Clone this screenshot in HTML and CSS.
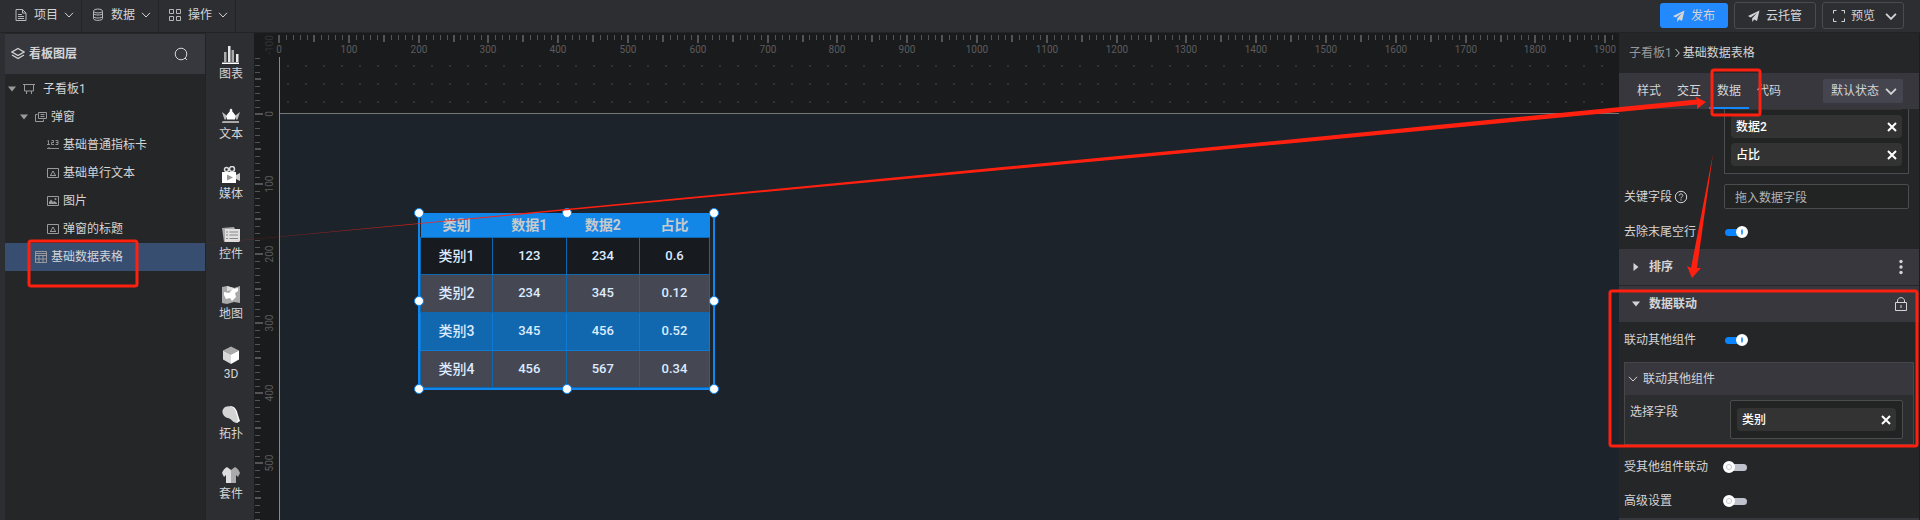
FILE: index.html
```html
<!DOCTYPE html>
<html lang="zh-CN">
<head>
  <meta charset="UTF-8" />
  <meta name="viewport" content="width=device-width, initial-scale=1.0"/>
  <title>看板编辑器</title>
  <link rel="stylesheet" href="styles.css">
</head>
<body>

<!-- shared icons -->
<svg class="defs" aria-hidden="true">
  <symbol id="i-down" viewBox="0 0 10 6"><path d="M1 .8 5 5 9 .8" fill="none" stroke="currentColor"/></symbol>
  <symbol id="i-down-bold" viewBox="0 0 10 6"><path d="M.8 .8 5 5 9.200 .8" fill="none" stroke="currentColor" stroke-width="1.600"/></symbol>
  <symbol id="i-caret" viewBox="0 0 8 6"><path d="M0 .5h8L4 5.500z" fill="currentColor"/></symbol>
  <symbol id="i-plane" viewBox="0 0 12 12"><path d="M11.500.5 0 6l2.700 1.500L9 3 4.200 8.200V12l2-2.500L9 11z" fill="currentColor"/></symbol>
  <symbol id="i-x" viewBox="0 0 10 10"><path d="M1 1l8 8M9 1 1 9" stroke="currentColor" stroke-width="2"/></symbol>
  <symbol id="i-text" viewBox="0 0 12 12"><path d="M.5 1.500h11v9H.5zM3.500 8.500 6 4l2.500 4.500zM3 8.500h6" fill="none" stroke="currentColor"/></symbol>
</svg>

<div class="app">
  <header class="topbar">
    <nav class="menu">
      <button class="menu-item"><svg width="12" height="14" viewBox="0 0 12 14"><path d="M1 1.500h6.500L11 5v7.500H1zM7.500 1.500V5H11M3 6.500h4M3 8.500h6M3 10.500h6" fill="none" stroke="currentColor"/></svg>项目<svg class="chev"><use href="#i-down"/></svg></button>
      <button class="menu-item"><svg width="12" height="14" viewBox="0 0 12 14"><path d="M1.500 3.500v7c0 2.500 9 2.500 9 0v-7M1.500 5.500c0 2 9 2 9 0M1.500 8.500c0 2 9 2 9 0" fill="none" stroke="currentColor"/><ellipse cx="6" cy="3" rx="4.500" ry="2" fill="none" stroke="currentColor"/></svg>数据<svg class="chev"><use href="#i-down"/></svg></button>
      <button class="menu-item"><svg width="12" height="14" viewBox="0 0 12 14"><path d="M.5 1.500h4v4h-4zM7.500 1.500h4v4h-4zM.5 8.500h4v4h-4zM7.500 8.500h4v4h-4z" fill="none" stroke="currentColor"/></svg>操作<svg class="chev"><use href="#i-down"/></svg></button>
    </nav>
    <div class="actions">
      <button class="btn btn-primary"><svg width="12" height="12"><use href="#i-plane"/></svg>发布</button>
      <button class="btn btn-wide"><svg width="12" height="12"><use href="#i-plane"/></svg>云托管</button>
      <button class="btn btn-wide btn-menu"><svg width="12" height="12" viewBox="0 0 12 12"><path d="M.5 3.500v-3h3M8.500.5h3v3M11.500 8.500v3h-3M3.500 11.500h-3v-3" fill="none" stroke="currentColor"/></svg>预览<svg class="chev-lg"><use href="#i-down-bold"/></svg></button>
    </div>
  </header>

  <main class="workspace">
    <aside class="layers">
      <div class="layers-head">
        <svg width="14" height="14" viewBox="0 0 14 14"><path d="M7 1.500 13 5 7 8.500 1 5zM1 8l6 3.500L13 8" fill="none" stroke="currentColor" stroke-width="1.300"/></svg>
        <h2>看板图层</h2>
        <button class="icon-btn" aria-label="搜索"><svg width="14" height="14" viewBox="0 0 14 14"><circle cx="7" cy="7" r="5.800" fill="none" stroke="currentColor"/><path d="M11 11l2 2" stroke="currentColor"/></svg></button>
      </div>
      <ul class="tree">
        <li class="node lv0"><svg class="caret"><use href="#i-caret"/></svg><svg class="ico" viewBox="0 0 12 12"><path d="M0 1.500h12M1.500 1.500v6.500h9V1.500M3.500 8v3M8.500 8v3" fill="none" stroke="currentColor"/></svg>子看板1</li>
        <li class="node lv1"><svg class="caret"><use href="#i-caret"/></svg><svg class="ico" viewBox="0 0 12 12"><path d="M3.500 1.500h8v6h-8zM2.500 3.500h-2v7h8v-2M5.500 3.500h4M5.500 5.500h4" fill="none" stroke="currentColor"/></svg>弹窗</li>
        <li class="node lv2"><svg class="ico" viewBox="0 0 12 12"><path d="M.5 2l1-.5v4M0 5.500h3M4.500 1.500h2v2h-2v2h2.500M8.500 1.500h2.500v4H8.500M9 3.500h2M0 9.500h12M2 8v1.500" fill="none" stroke="currentColor" stroke-width=".9"/></svg>基础普通指标卡</li>
        <li class="node lv2"><svg class="ico"><use href="#i-text"/></svg>基础单行文本</li>
        <li class="node lv2"><svg class="ico" viewBox="0 0 12 12"><path d="M.5 1.500h11v9H.5z" fill="none" stroke="currentColor"/><path d="M2 9V7l2-2.500L6 7l1.500-1L10 8v1z" fill="currentColor"/><circle cx="8.500" cy="4" r="1" fill="currentColor"/></svg>图片</li>
        <li class="node lv2"><svg class="ico"><use href="#i-text"/></svg>弹窗的标题</li>
        <li class="node lv1 leaf selected"><svg class="ico" viewBox="0 0 12 12"><path d="M.5 .5h11v11H.5zM.5 4.500h11M.5 8h11M4 4.500v7M8 4.500v7M.5 2.500h11" fill="none" stroke="currentColor"/></svg>基础数据表格</li>
      </ul>
    </aside>

    <nav class="tools">
      <button class="tool"><svg viewBox="0 0 18 18"><path d="M1 16.500h16V18H0v-1.500z" fill="#fff"/><path d="M2 6h2.500v10H2zM9.500 4H12v12H9.500z" fill="#aaa"/><path d="M6 0h2.500v16H6zM14 8h2.500v8H14z" fill="#e8e8e8"/></svg>图表</button>
      <button class="tool"><svg viewBox="0 0 18 18"><path d="M0 6l4 3v4.500H2.500zM18 6l-4 3v4.500h1.500z" fill="#bbb"/><path d="M9 2.500l1.500 1.500-.5 1 4 5-1 3.500H5L4 10l4-5-.5-1z" fill="#fff"/><path d="M1 15h16v2H0v-1z" fill="#aaa"/></svg>文本</button>
      <button class="tool"><svg viewBox="0 0 18 18"><circle cx="4.500" cy="3.500" r="2" fill="none" stroke="#ddd" stroke-width="1.500"/><circle cx="10" cy="3" r="2.500" fill="none" stroke="#ddd" stroke-width="1.500"/><path d="M0 6h14v11H0z" fill="#fff"/><path d="M14 9l4-2v8l-4-2z" fill="#ccc"/><path d="M5 8.500l6 3-6 3z" fill="#999"/></svg>媒体</button>
      <button class="tool"><svg viewBox="0 0 18 18"><path d="M0 2l12-1 1 2v12L2 16z" fill="#aaa"/><path d="M3 3h15v12l-1 1H3z" fill="#e0e0e0"/><path d="M4 6h2M7.500 6H16M4 9h2M7.500 9H16M4 12.500h2M7.500 12.500H16" stroke="#888"/></svg>控件</button>
      <button class="tool"><svg viewBox="0 0 18 18"><path d="M0 1l5-1 7 2 6-2v17l-6-1-7 2-5-1z" fill="#aaa"/><path d="M5 0l7 2v2L5 5z" fill="#ddd"/><path d="M2 6l5 1 4-4 5-1v3l-3 2 1 4-4 4-2-3-4 1-2-4z" fill="#fff"/></svg>地图</button>
      <button class="tool"><svg viewBox="0 0 18 18"><path d="M9 .5 17 4.500 9 8.500 1 4.500z" fill="#aaa"/><path d="M1 4.500l8 4V18l-8-4.500z" fill="#d8d8d8"/><path d="M17 4.500l-8 4V18l8-4.500z" fill="#fff"/></svg>3D</button>
      <button class="tool"><svg viewBox="0 0 18 18"><path d="M8 0c5 0 7 4 8 9l2 6-3 2z" fill="#fff"/><path d="M3 1c6-2 10 1 11 6l2 6-1 4c-4 0-5-4-9-5C1 11-2 5 3 1z" fill="#d4d4d4"/></svg>拓扑</button>
      <button class="tool"><svg viewBox="0 0 18 18"><path d="M5 1l4 3v13H4v-8L2 11 0 7c1-3 3-5 5-6z" fill="#ddd"/><path d="M13 1 9 4v13h5v-8l2 2 2-4c-1-3-3-5-5-6z" fill="#aaa"/></svg>套件</button>
    </nav>

    <section class="stage">
      <svg class="rulers" id="rulers">
        <defs>
          <pattern id="dots" x="33" y="32" width="18" height="18" patternUnits="userSpaceOnUse"><rect width="2" height="2" fill="#303133"/></pattern>
        </defs>
        <rect x="26" y="24" width="100%" height="56" fill="url(#dots)"/>
        <rect x="25" y="81" width="100%" height="100%" fill="#1c232a"/>
        <rect x="25" y="80" width="100%" height="1" fill="#77777a"/>
        <rect x="25" y="24" width="1" height="100%" fill="#88888a"/>
      </svg>

      <div class="widget">
        <table class="data-table">
          <thead>
            <tr><th class="first">类别</th><th>数据1</th><th>数据2</th><th class="last">占比</th></tr>
          </thead>
          <tbody>
            <tr><td>类别1</td><td>123</td><td>234</td><td>0.6</td></tr>
            <tr><td>类别2</td><td>234</td><td>345</td><td>0.12</td></tr>
            <tr class="active"><td>类别3</td><td>345</td><td>456</td><td>0.52</td></tr>
            <tr><td>类别4</td><td>456</td><td>567</td><td>0.34</td></tr>
          </tbody>
        </table>
        <i class="handle top left"></i><i class="handle top center"></i><i class="handle top right"></i>
        <i class="handle middle left"></i><i class="handle middle right"></i>
        <i class="handle bottom left"></i><i class="handle bottom center"></i><i class="handle bottom right"></i>
      </div>
    </section>

    <aside class="props">
      <div class="crumbs"><a href="#">子看板1</a><svg width="5" height="10" viewBox="0 0 5 10"><path d="M.5 1 4.300 5 .5 9" fill="none" stroke="currentColor"/></svg><span>基础数据表格</span></div>
      <div class="tabs">
        <button class="tab">样式</button>
        <button class="tab">交互</button>
        <button class="tab current">数据</button>
        <button class="tab">代码</button>
        <div class="state">
          <select aria-label="状态"><option>默认状态</option></select>
          <svg class="chev-lg"><use href="#i-down-bold"/></svg>
        </div>
      </div>

      <div class="row row-fields">
        <div class="field-box">
          <div class="chip chip-cut"></div>
          <div class="chip">数据2<button aria-label="移除数据2"><svg><use href="#i-x"/></svg></button></div>
          <div class="chip">占比<button aria-label="移除占比"><svg><use href="#i-x"/></svg></button></div>
        </div>
      </div>
      <div class="row row-key">
        <label for="keyField">关键字段<svg width="14" height="14" viewBox="0 0 14 14"><circle cx="7" cy="7" r="5.700" fill="none" stroke="currentColor"/><path d="M5.200 5.600c0-2.400 3.600-2.200 3.600-.1C8.800 6.800 7 6.800 7 8.300M7 9.300v1.200" fill="none" stroke="currentColor"/></svg></label>
        <input type="text" id="keyField" class="text-input" placeholder="拖入数据字段" />
      </div>
      <div class="row row-trim">
        <label for="trimRows">去除末尾空行</label>
        <input type="checkbox" id="trimRows" class="switch" checked />
      </div>

      <div class="section">
        <svg width="6" height="8" viewBox="0 0 6 8"><path d="M.5 0v8L5.500 4z" fill="currentColor"/></svg>
        <h3>排序</h3>
        <button class="icon-btn" aria-label="更多"><svg width="12" height="16" viewBox="0 0 12 16"><circle cx="6" cy="2.500" r="1.700" fill="currentColor"/><circle cx="6" cy="8" r="1.700" fill="currentColor"/><circle cx="6" cy="13.500" r="1.700" fill="currentColor"/></svg></button>
      </div>
      <div class="section">
        <svg width="8" height="6"><use href="#i-caret"/></svg>
        <h3>数据联动</h3>
        <button class="icon-btn" aria-label="锁定"><svg width="12" height="14" viewBox="0 0 12 14"><path d="M.5 5.500h11v8H.5zM2.500 5.500V4c0-4.500 7-4.500 7 0v1.500M6 8v3" fill="none" stroke="currentColor"/></svg></button>
      </div>
      <div class="row">
        <label for="linkOthers">联动其他组件</label>
        <input type="checkbox" id="linkOthers" class="switch" checked />
      </div>
      <div class="group">
        <div class="group-head"><svg class="chev"><use href="#i-down"/></svg>联动其他组件</div>
        <div class="group-body">
          <span>选择字段</span>
          <div class="field-box small">
            <div class="chip">类别<button aria-label="移除类别"><svg><use href="#i-x"/></svg></button></div>
          </div>
        </div>
      </div>
      <div class="row">
        <label for="linkedBy">受其他组件联动</label>
        <input type="checkbox" id="linkedBy" class="switch" />
      </div>
      <div class="row">
        <label for="advanced">高级设置</label>
        <input type="checkbox" id="advanced" class="switch" />
      </div>
      <div class="section"></div>
    </aside>
  </main>

  <!-- red guide marks over the editor -->
  <svg class="guide" aria-hidden="true">
    <defs>
      <linearGradient id="fade" gradientUnits="userSpaceOnUse" x1="160" y1="0" x2="480" y2="0">
        <stop offset="0" stop-color="#ff2010" stop-opacity=".15"/>
        <stop offset="1" stop-color="#ff2010"/>
      </linearGradient>
    </defs>
    <g fill="none" stroke="#ff2010" stroke-width="3">
      <rect x="29" y="241" width="108" height="45" rx="2"/>
      <rect x="1712" y="70" width="48" height="45" rx="2"/>
      <rect x="1610" y="291" width="307" height="155" rx="2"/>
    </g>
    <path d="M160 248 1300 138.500 1697 99.500 1695 96.500 1706 102 1697 109 1697 104.500 1300 142.500z" fill="url(#fade)"/>
    <path d="M1713 154 1691 268 1687 266 1692 278 1701 268 1697 268z" fill="#ff2010"/>
  </svg>
</div>

<script>
  // draws ruler ticks and labels, one canvas unit = SCALE px
  const SCALE = 0.698;
  const ORIGIN_X = 25;
  const ORIGIN_Y = 81;
  const rulers = document.getElementById("rulers");
  const width = rulers.clientWidth;
  const height = rulers.clientHeight;

  function add(name, attrs, text) {
    const el = document.createElementNS("http://www.w3.org/2000/svg", name);
    for (const key in attrs) {
      el.setAttribute(key, attrs[key]);
    }
    if (text !== undefined) el.textContent = text;
    rulers.appendChild(el);
  }

  for (let v = 0; ORIGIN_X + v * SCALE < width; v += 10) {
    const x = Math.round(ORIGIN_X + v * SCALE);
    const big = v % 50 === 0;
    const h = v % 100 === 0 ? 8 : big ? 7 : 5;
    add("rect", { x: big ? x - 1 : x, y: 2, width: big ? 2 : 1, height: h, class: "tick" });
    if (v % 100 === 0 && x + 12 < width) {
      add("text", { x: x, y: 20, class: "tick-label" }, v);
    }
  }

  for (let v = -80; ORIGIN_Y + v * SCALE < height; v += 10) {
    const y = Math.round(ORIGIN_Y + v * SCALE);
    const big = v % 50 === 0;
    const w = v % 100 === 0 ? 8 : big ? 6 : 5;
    add("rect", { x: 1, y: big ? y - 1 : y, width: w, height: big ? 2 : 1, class: "tick" });
    if (v % 100 === 0 && y + 10 < height) {
      add("text", { transform: "translate(19 " + y + ") rotate(-90)", class: "tick-label" }, v);
    }
  }
  add("text", { transform: "translate(19 12) rotate(-90)", class: "tick-label dim" }, "-100");
</script>

</body>
</html>
```
FILE: styles.css
```css
*, *::before {
  box-sizing: border-box;
}
body {
  margin: 0;
  background: #252627;
  color: #d4d4d6;
  font-family: Roboto, "Noto Sans CJK SC", sans-serif;
  font-size: 12px;
  line-height: 18px;
}
button, input, select {
  font: inherit;
  color: inherit;
}
button {
  border: none;
  background: none;
  padding: 0;
  cursor: pointer;
}
svg {
  flex: none;
}
h2, h3 {
  margin: 0;
  font-size: 12px;
  font-weight: bold;
}
.defs {
  position: absolute;
  width: 0;
  height: 0;
}
.app {
  position: relative;
  display: flex;
  flex-direction: column;
  height: 100vh;
  overflow: hidden;
}

/* top bar */
.topbar {
  display: flex;
  justify-content: space-between;
  flex: none;
  height: 33px;
  padding: 0 16px 0 5px;
  background: #2d2e32;
  border-bottom: 1px solid #222325;
}
.menu {
  display: flex;
}
.menu-item {
  display: flex;
  align-items: center;
  width: 77px;
  padding: 0 0 2px 10px;
  border-right: 1px solid #222325;
}
.chev {
  width: 10px;
  height: 6px;
}
.chev-lg {
  width: 12px;
  height: 7px;
}
.menu-item .chev {
  margin-left: 6px;
}
.menu-item svg:first-child {
  margin-right: 7px;
  color: #b8b8ba;
}
.actions {
  display: flex;
  align-items: center;
  gap: 6px;
  padding-bottom: 1px;
}
.btn {
  display: flex;
  align-items: center;
  justify-content: center;
  gap: 6px;
  width: 68px;
  height: 25px;
  padding-top: 1px;
  border-radius: 3px;
}
.btn-primary {
  background: #2289ff;
}
.btn-wide {
  width: 82px;
  height: 27px;
  border: 1px solid #4a4b50;
}
.btn-menu {
  justify-content: flex-start;
  padding-left: 10px;
}
.btn .chev-lg {
  margin-left: 4px;
}

.workspace {
  display: flex;
  flex: 1;
  min-height: 0;
}

/* layer tree */
.layers {
  flex: none;
  width: 206px;
  padding-top: 1px;
  border-left: 5px solid #2d2e32;
  border-right: 1px solid #222325;
}
.layers-head {
  display: flex;
  align-items: center;
  gap: 4px;
  height: 40px;
  padding: 0 17px 0 6px;
  background: #37383d;
}
.icon-btn {
  display: flex;
  margin-left: auto;
}
.tree {
  margin: 0;
  padding: 1px 0 0;
  list-style: none;
}
.node {
  display: flex;
  align-items: center;
  height: 28px;
}
.node svg {
  color: #9a9a9c;
}
.caret {
  width: 8px;
  height: 6px;
}
.ico {
  width: 12px;
  height: 12px;
  margin-right: 4px;
}
.lv0 {
  padding-left: 3px;
}
.lv0 .ico {
  margin: 0 8px 0 7px;
}
.lv1 {
  padding-left: 15px;
}
.lv1 .ico {
  margin-left: 7px;
}
.lv1.leaf {
  padding-left: 23px;
}
.lv2 {
  padding-left: 42px;
}
.selected {
  background: #374e71;
}

/* component strip */
.tools {
  display: flex;
  flex-direction: column;
  flex: none;
  width: 48px;
  padding-top: 1px;
  background: #2d2e32;
}
.tool {
  display: flex;
  flex-direction: column;
  align-items: center;
  gap: 1px;
  flex: none;
  height: 60px;
  padding: 12px 0 0 2px;
}
.tool svg {
  width: 18px;
  height: 18px;
}

/* canvas */
.stage {
  position: relative;
  flex: 1;
  min-width: 0;
  overflow: hidden;
  background: #1a1b1c;
}
.rulers {
  display: block;
  width: 100%;
  height: 100%;
}
.tick {
  fill: #555356;
}
.tick-label {
  fill: #5c5c5f;
  font-size: 10px;
  text-anchor: middle;
}
.dim {
  opacity: 0.4;
}
.widget {
  position: absolute;
  left: 164px;
  top: 180px;
  width: 297px;
  padding-right: 3px;
  border: 2px solid #0f86f0;
  border-top-width: 1px;
}
.data-table {
  width: 100%;
  border-collapse: collapse;
  table-layout: fixed;
  font-size: 14px;
  text-align: center;
}
.data-table th {
  height: 23px;
  padding: 0;
  background: #1387e8;
  color: #c8cacd;
  line-height: 22px;
}
.data-table .first {
  width: 72px;
}
.data-table .last {
  width: 70px;
}
.data-table td {
  height: 38px;
  padding: 0;
  background: #454753;
  border: 1px solid #0f67b0;
  color: #dcebff;
  font-weight: 500;
}
.data-table td + td {
  font-size: 13px;
}
.data-table tbody tr:first-child td {
  height: 37px;
  background: #171a1f;
}
.data-table tbody tr:last-child td {
  height: 37px;
}
.data-table .active td {
  background: #1268ae;
  border-color: #0f7ad4;
}
.handle {
  position: absolute;
  width: 10px;
  height: 10px;
  border: 1px solid #0f86f0;
  border-radius: 50%;
  background: #fff;
}
.top { top: -6px; }
.middle { top: 50%; margin-top: -5px; }
.bottom { bottom: -6px; }
.left { left: -6px; }
.center { left: 50%; margin-left: -5px; }
.right { right: -6px; }

/* property panel */
.props {
  flex: none;
  width: 301px;
  border-right: 1px solid #1c1d1e;
  overflow: hidden;
}
.crumbs {
  display: flex;
  align-items: center;
  gap: 3px;
  height: 40px;
  padding-left: 10px;
}
.crumbs a {
  color: #98989a;
  text-decoration: none;
}
.tabs {
  display: flex;
  align-items: center;
  height: 36px;
  padding: 0 16px 0 10px;
  background: #37373d;
}
.tab {
  width: 40px;
  height: 36px;
  padding-top: 2px;
  border-bottom: 2px solid transparent;
}
.tab.current {
  border-color: #1487fb;
}
.state {
  position: relative;
  margin-left: auto;
}
.state select {
  appearance: none;
  display: block;
  width: 80px;
  height: 24px;
  padding: 0 8px;
  border: none;
  border-radius: 2px;
  background: #45454f;
}
.state svg {
  position: absolute;
  right: 6px;
  top: 9px;
  pointer-events: none;
}
.row {
  display: grid;
  grid-template-columns: 100px 1fr;
  align-items: center;
  height: 34px;
  padding: 0 10px 0 5px;
}
.row label {
  display: flex;
  align-items: center;
  gap: 2px;
}
.row-fields {
  height: 65px;
}
.row-fields .field-box {
  grid-column: 2;
}
.row-key {
  height: 45px;
}
.row-trim {
  height: 30px;
  padding-bottom: 4px;
}
.field-box {
  display: flex;
  flex-direction: column;
  gap: 5px;
  height: 65px;
  padding: 0 6px;
  border: 1px solid #4c4c4e;
  border-top: none;
  background: #222323;
}
.field-box.small {
  height: 39px;
  padding: 7px 6px;
  border-top: 1px solid #4c4c4e;
  border-radius: 2px;
}
.chip {
  display: flex;
  align-items: center;
  justify-content: space-between;
  flex: none;
  height: 23px;
  padding: 1px 5px 0;
  border-radius: 4px;
  background: #333333;
  color: #fff;
  font-weight: 500;
}
.chip-cut {
  height: 1px;
}
.chip button {
  display: flex;
}
.chip svg {
  width: 10px;
  height: 10px;
}
.text-input {
  width: 100%;
  height: 25px;
  padding: 3px 10px 0;
  border: 1px solid #4c4c4e;
  border-radius: 2px;
  background: #222323;
}
.text-input::placeholder {
  color: #b4b4b6;
}
.switch {
  appearance: none;
  display: flex;
  align-items: center;
  width: 22px;
  height: 7px;
  margin: 0 1px;
  border-radius: 4px;
  background: #bfc2cc;
}
.switch::before {
  content: "";
  flex: none;
  width: 12px;
  height: 12px;
  margin-left: -2px;
  border: 3px solid #fff;
  border-radius: 50%;
  background: #fff;
  box-shadow: inset 0 0 0 1px #c4c6d0;
}
.switch:checked {
  justify-content: flex-end;
  background: #0b84ff;
}
.switch:checked::before {
  margin-right: -1px;
  border-width: 3px 5px;
  background: #2f95ff;
  box-shadow: none;
}
.section {
  display: flex;
  align-items: center;
  height: 37px;
  padding: 0 12px 0 13px;
  border-bottom: 1px solid #252627;
  background: #37373d;
}
.section h3 {
  margin-left: 9px;
}
.section svg {
  min-width: 8px;
}
.group {
  margin: 5px 5px 5px 5px;
  border: 1px solid #47474b;
  background: #2c2d2f;
}
.group-head {
  display: flex;
  align-items: center;
  gap: 5px;
  height: 32px;
  padding-left: 3px;
  background: #37373d;
}
.group-body {
  display: grid;
  grid-template-columns: 100px 1fr;
  height: 49px;
  padding: 5px 10px 5px 5px;
}
.group-body span {
  padding-top: 3px;
}

/* guide marks */
.guide {
  position: absolute;
  left: 0;
  top: 0;
  width: 100%;
  height: 100%;
  pointer-events: none;
}
```
